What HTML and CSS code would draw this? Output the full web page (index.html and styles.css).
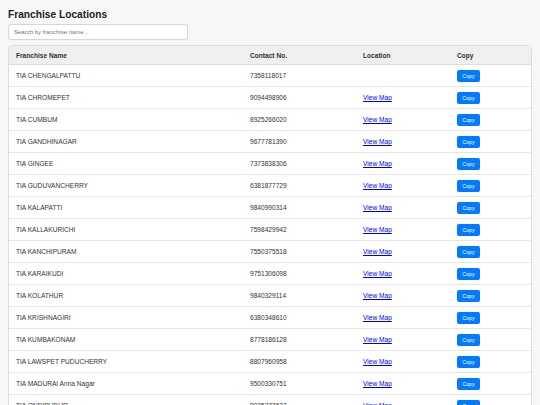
FILE: index.html
```
<!DOCTYPE html>
<html>

<head>
  <meta charset="utf-8">
  <title>Franchise Locations</title>
  <link rel="stylesheet" href="styles.css">
</head>

<body>

  <h2 class="title">Franchise Locations</h2>
  <input type="text" class="search" placeholder="Search by franchise name...">

  <div class="table-wrap">
    <table class="franchise-table">
      <thead>
        <tr>
          <th class="col-name">Franchise Name</th>
          <th class="col-contact">Contact No.</th>
          <th class="col-location">Location</th>
          <th>Copy</th>
        </tr>
      </thead>
      <tbody id="rows">
      </tbody>
    </table>
  </div>

  <script>
    const franchises = [
      ['TIA CHENGALPATTU', '7358118017', false],
      ['TIA CHROMEPET', '9094498906', true],
      ['TIA CUMBUM', '8925266020', true],
      ['TIA GANDHINAGAR', '9677781390', true],
      ['TIA GINGEE', '7373838306', true],
      ['TIA GUDUVANCHERRY', '6381877729', true],
      ['TIA KALAPATTI', '9840990314', true],
      ['TIA KALLAKURICHI', '7598429942', true],
      ['TIA KANCHIPURAM', '7550375518', true],
      ['TIA KARAIKUDI', '9751306098', true],
      ['TIA KOLATHUR', '9840329114', true],
      ['TIA KRISHNAGIRI', '6380348610', true],
      ['TIA KUMBAKONAM', '8778186128', true],
      ['TIA LAWSPET PUDUCHERRY', '8807960958', true],
      ['TIA MADURAI Anna Nagar', '9500330751', true],
      ['TIA ONDIPUDUR', '9025373637', true]
    ];

    const rows = document.getElementById('rows');
    for (let i = 0; i < franchises.length; i++) {
      const f = franchises[i];
      rows.innerHTML += '<tr><td>' + f[0] + '</td><td>' + f[1] + '</td><td>' +
        (f[2] ? '<a href="#">View Map</a>' : '') +
        '</td><td><button class="copy-btn">Copy</button></td></tr>';
    }
  </script>
</body>

</html>
```

FILE: styles.css
```
body {
  margin: 8px;
  background: #f7f7f7;
  font-family: "Liberation Sans", Arial, sans-serif;
  color: #333;
}

.title {
  font-size: 10.2px;
  margin: 1px 0 4px;
  color: #222;
}

.search {
  display: block;
  box-sizing: border-box;
  width: 180px;
  height: 16px;
  padding: 0 5px;
  border: 1px solid #d6d6d6;
  border-radius: 3px;
  background: #fff;
  font-family: "Liberation Sans", Arial, sans-serif;
  font-size: 6px;
  margin: 0 0 5px;
}

.search::placeholder {
  color: #777;
}

.table-wrap {
  background: #fff;
  border: 1px solid #ddd;
  border-radius: 4px;
  overflow: hidden;
}

.franchise-table {
  width: 100%;
  border-collapse: collapse;
  table-layout: fixed;
  font-size: 6.6px;
}

.franchise-table th {
  background: #efefef;
  text-align: left;
  font-weight: bold;
  height: 18px;
  padding: 0 7px;
  border-bottom: 1px solid #ddd;
}

.col-name {
  width: 220px;
}

.col-contact {
  width: 99px;
}

.col-location {
  width: 80px;
}

.franchise-table td {
  height: 21px;
  padding: 0 7px;
  border-bottom: 1px solid #e6e6e6;
}

.franchise-table a {
  color: #0000ee;
}

.copy-btn {
  background: #007bff;
  color: #fff;
  border: none;
  border-radius: 2px;
  font-family: "Liberation Sans", Arial, sans-serif;
  font-size: 5.3px;
  width: 23px;
  height: 12px;
  padding: 0;
  cursor: pointer;
}
```
